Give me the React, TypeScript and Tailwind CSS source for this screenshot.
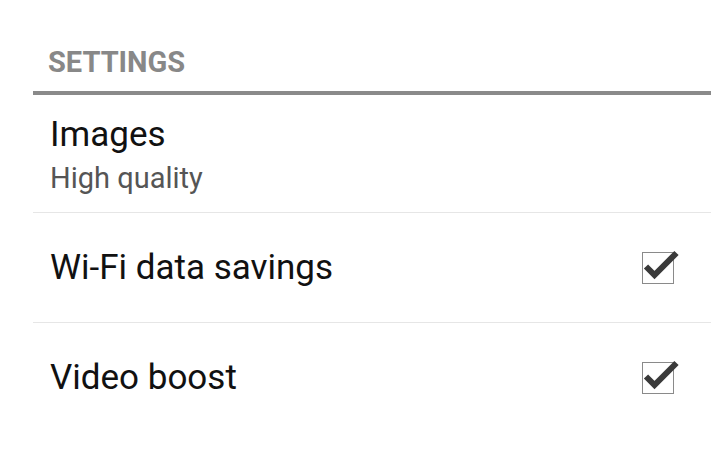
import React from "react";

function Check() {
  return (
    <div className="relative w-[32px] h-[32px] border-[1.5px] border-[#8a8a8a] bg-white">
      <svg
        className="absolute left-[-2px] top-[-4px]"
        width="42"
        height="36"
        viewBox="0 0 42 36"
        fill="none"
      >
        <path
          d="M5 17.5 L13.5 26 L35.5 4"
          stroke="#3a3a3a"
          strokeWidth="6"
          strokeLinecap="butt"
          strokeLinejoin="miter"
        />
      </svg>
    </div>
  );
}

export default function App() {
  return (
    <div
      className="w-[728px] h-[459px] bg-white overflow-hidden pl-[33px] pr-[17px]"
      style={{ fontFamily: "Roboto, 'Noto Sans', sans-serif" }}
    >
      <div className="h-[95px] border-b-4 border-[#8a8a8a] flex items-end pb-[12px] pl-[15px]">
        <div className="text-[29px] leading-[34px] font-bold text-[#888]">SETTINGS</div>
      </div>
      <div className="h-[118px] flex flex-col border-b border-[#e6e6e6] pl-[17px] pt-[20px]">
        <div className="text-[35px] leading-[40px] text-[#111]">Images</div>
        <div className="text-[29px] leading-[34px] text-[#555] mt-[6px]">High quality</div>
      </div>
      <div className="h-[110px] flex items-center justify-between border-b border-[#e6e6e6] pl-[17px] pr-[37px]">
        <div className="text-[35px] leading-[40px] text-[#111]">Wi-Fi data savings</div>
        <Check />
      </div>
      <div className="h-[110px] flex items-center justify-between pl-[17px] pr-[37px]">
        <div className="text-[35px] leading-[40px] text-[#111]">Video boost</div>
        <Check />
      </div>
    </div>
  );
}
